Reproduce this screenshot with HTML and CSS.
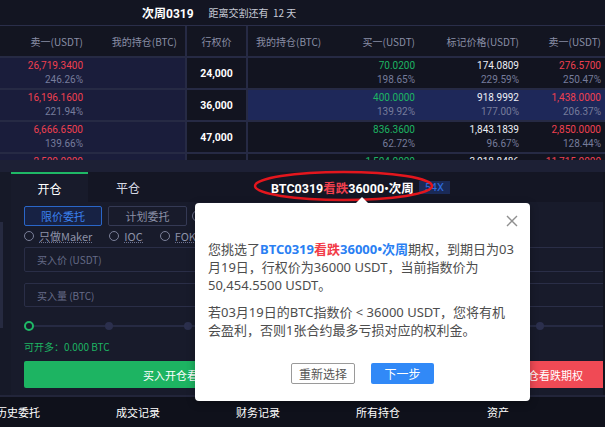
FILE: index.html
```html
<!DOCTYPE html>
<html lang="zh-CN">
<head>
<meta charset="utf-8">
<title>期权交易</title>
<link rel="stylesheet" href="styles.css">
</head>
<body>
<div class="app">
  <header class="topbar">
    <span class="week">次周0319</span>
    <span class="countdown">距离交割还有&nbsp; 12 天</span>
  </header>

  <section class="chain">
    <div class="row head">
      <div class="c l">卖一(USDT)</div>
      <div class="c l">我的持仓(BTC)</div>
      <div class="c mid">行权价</div>
      <div class="c r start">我的持仓(BTC)</div>
      <div class="c r">买一(USDT)</div>
      <div class="c r">标记价格(USDT)</div>
      <div class="c r last">卖一(USDT)</div>
    </div>
    <div class="row">
      <div class="c l"><span class="p red">26,719.3400</span><span class="pct">246.26%</span></div>
      <div class="c l"></div>
      <div class="c mid strike">24,000</div>
      <div class="c r start"></div>
      <div class="c r"><span class="p green">70.0200</span><span class="pct">198.65%</span></div>
      <div class="c r"><span class="p white">174.0809</span><span class="pct">229.59%</span></div>
      <div class="c r last"><span class="p red">276.5700</span><span class="pct">250.47%</span></div>
    </div>
    <div class="row sel">
      <div class="c l"><span class="p red">16,196.1600</span><span class="pct">221.94%</span></div>
      <div class="c l"></div>
      <div class="c mid strike">36,000</div>
      <div class="c r start"></div>
      <div class="c r"><span class="p green">400.0000</span><span class="pct">139.92%</span></div>
      <div class="c r"><span class="p white">918.9992</span><span class="pct">177.00%</span></div>
      <div class="c r last"><span class="p red">1,438.0000</span><span class="pct">206.37%</span></div>
    </div>
    <div class="row">
      <div class="c l"><span class="p red">6,666.6500</span><span class="pct">139.66%</span></div>
      <div class="c l"></div>
      <div class="c mid strike">47,000</div>
      <div class="c r start"></div>
      <div class="c r"><span class="p green">836.3600</span><span class="pct">62.72%</span></div>
      <div class="c r"><span class="p white">1,843.1839</span><span class="pct">96.67%</span></div>
      <div class="c r last"><span class="p red">2,850.0000</span><span class="pct">128.44%</span></div>
    </div>
    <div class="row">
      <div class="c l"><span class="p red">2,500.0000</span><span class="pct">85.12%</span></div>
      <div class="c l"></div>
      <div class="c mid strike">58,000</div>
      <div class="c r start"></div>
      <div class="c r"><span class="p green">1,504.0000</span><span class="pct">40.21%</span></div>
      <div class="c r"><span class="p white">3,018.8486</span><span class="pct">70.35%</span></div>
      <div class="c r last"><span class="p red">11,715.0000</span><span class="pct">98.10%</span></div>
    </div>
  </section>

  <div class="band"></div>

  <section class="trade">
    <div class="strip"><div class="thumb"></div></div>
    <div class="panel">
      <div class="tabs">
        <div class="tab active">开仓</div>
        <div class="tab">平仓</div>
        <div class="title">BTC0319<span class="down">看跌</span>36000•次周</div>
        <div class="badge">54X</div>
      </div>
      <div class="opts">
        <div class="types">
          <div class="type on">限价委托</div>
          <div class="type">计划委托</div>
          <div class="help"></div>
        </div>
        <div class="radios">
          <div class="radio"><span class="dot"></span><span class="lbl">只做Maker</span></div>
          <div class="radio"><span class="dot"></span><span class="lbl">IOC</span></div>
          <div class="radio"><span class="dot"></span><span class="lbl">FOK</span></div>
        </div>
      </div>
      <div class="forms">
        <div class="form">
          <div class="field">买入价 (USDT)</div>
          <div class="field second">买入量 (BTC)</div>
          <div class="slider"><span class="knob"></span><span class="tick"></span><span class="tick"></span><span class="tick"></span><span class="tick"></span></div>
          <div class="avail">可开多：0.000 BTC</div>
          <div class="btn buy">买入开仓看跌期权</div>
        </div>
        <div class="form">
          <div class="field">卖出价 (USDT)</div>
          <div class="field second">卖出量 (BTC)</div>
          <div class="slider"><span class="knob"></span><span class="tick"></span><span class="tick"></span><span class="tick"></span><span class="tick"></span></div>
          <div class="avail">可开空：0.000 BTC</div>
          <div class="btn sell">卖出开仓看跌期权</div>
        </div>
      </div>
    </div>
  </section>

  <div class="divider"></div>

  <nav class="bottom-nav">
    <span class="nav-item">历史委托</span>
    <span class="nav-item">成交记录</span>
    <span class="nav-item">财务记录</span>
    <span class="nav-item">所有持仓</span>
    <span class="nav-item">资产</span>
  </nav>

  <svg class="ring" width="182" height="32" viewBox="0 0 182 32">
    <ellipse cx="90.5" cy="16" rx="88.5" ry="14" fill="none" stroke="#e3161d" stroke-width="2.5"/>
  </svg>

  <div class="pop">
    <span class="arrow"></span>
    <svg class="close" width="12" height="12" viewBox="0 0 12 12">
      <path d="M1 1 L11 11 M11 1 L1 11" stroke="#8f8f8f" stroke-width="1.4" fill="none"/>
    </svg>
    <p class="msg">您挑选了<b class="blue">BTC0319</b><b class="redb">看跌</b><b class="blue">36000•次周</b>期权，到期日为03<br>月19日，行权价为36000 USDT，当前指数价为<br>50,454.5500 USDT。</p>
    <p class="msg second">若03月19日的BTC指数价 &lt; 36000 USDT，您将有机<br>会盈利，否则1张合约最多亏损对应的权利金。</p>
    <div class="actions">
      <span class="act ghost">重新选择</span>
      <span class="act primary">下一步</span>
    </div>
  </div>
</div>
</body>
</html>
```

FILE: styles.css
```css
* { box-sizing: border-box; margin: 0; padding: 0; }
html, body { width: 605px; height: 427px; overflow: hidden; }
body {
  background: #131520;
  font-family: Roboto, "Noto Sans CJK SC", sans-serif;
  color: #fff;
}
.app {
  width: 605px;
  height: 427px;
  position: relative;
  overflow: hidden;
  display: flex;
  flex-direction: column;
}

/* top bar */
.topbar {
  flex: none;
  height: 26px;
  display: flex;
  align-items: center;
  padding-left: 142px;
  gap: 15px;
  background: #131522;
  border-bottom: 1px solid #2a2e4a;
}
.week { font-size: 12px; font-weight: 700; color: #fff; }
.countdown { font-size: 10px; color: #c7cad6; font-family: "Noto Sans CJK SC", sans-serif; }

/* chain table */
.chain { flex: none; height: 134px; overflow: hidden; }
.row {
  display: grid;
  grid-template-columns: 91px 94px 63px 92px 83px 104px 78px;
  height: 32px;
  border-bottom: 2px solid #262a44;
}
.c {
  display: flex;
  flex-direction: column;
  justify-content: center;
  align-items: flex-end;
  padding: 0 8px;
  background: #121420;
}
.row .c.l { background: #1a1d3b; }
.row.head .c { background: #131521; font-size: 10px; color: #8a8fa6; font-family: "Noto Sans CJK SC", sans-serif; }
.c.mid { align-items: center; border-left: 2px solid #262a44; border-right: 2px solid #262a44; background: #121420; }
.c.start { align-items: flex-start; }
.c.last { padding-right: 4px; }
.row.sel .c.r { background: #1e2859; }
.p, .pct { font-size: 10px; line-height: 14px; }
.pct { color: #767c9b; }
.red { color: #ef4050; }
.green { color: #1db463; }
.white { color: #eceef5; }
.strike { font-size: 10.5px; font-weight: 700; color: #fff; }

.band { flex: none; height: 12px; background: #1d2035; }

/* trade panel */
.trade { flex: none; height: 223px; display: flex; }
.strip { width: 11px; background: #161928; padding: 50px 8px 67px 0; }
.thumb { width: 3px; height: 100%; background: #262a40; }
.panel {
  flex: 1;
  min-width: 0;
  background: #181b2b;
  overflow: hidden;
  border-right: 2px solid #12141f;
}
.tabs { display: flex; align-items: center; height: 30px; background: #141624; }
.tab {
  flex: none;
  width: 77px;
  height: 30px;
  display: flex;
  align-items: center;
  justify-content: center;
  font-size: 12px;
  color: #d6d9e4;
  font-family: "Noto Sans CJK SC", sans-serif;
}
.tab + .tab { width: 80px; }
.tab.active { background: #181b2b; border-top: 2px solid #1fb866; color: #fff; }
.title {
  margin-left: 103px;
  font-size: 12.5px;
  font-weight: 700;
  color: #fff;
  white-space: nowrap;
}
.title .down { color: #f0404e; }
.badge {
  margin-left: 5px;
  height: 13px;
  padding: 0 6px;
  background: #1a2a57;
  color: #2e6de0;
  font-size: 11px;
  line-height: 13px;
}

.opts { padding: 4px 13px 0; font-family: "Noto Sans CJK SC", sans-serif; }
.types { display: flex; align-items: center; gap: 6px; height: 20px; }
.type {
  width: 78px;
  height: 20px;
  border: 1px solid #353a55;
  border-radius: 2px;
  color: #8a8fa6;
  font-size: 11px;
  display: flex;
  align-items: center;
  justify-content: center;
}
.type + .type { width: 79px; }
.type.on { border-color: #2a66c8; background: #172244; color: #3a80ee; }
.help { width: 12px; height: 12px; border: 1.5px solid #6f7490; border-radius: 50%; margin-left: -1px; }
.radios { display: flex; align-items: center; gap: 17px; margin-top: 4px; height: 12px; }
.radio { display: flex; align-items: center; gap: 5px; }
.radio .dot { width: 10px; height: 10px; border: 1.5px solid #7b8099; border-radius: 50%; }
.radio .lbl {
  font-size: 11px;
  line-height: 12px;
  color: #8d92a8;
  border-bottom: 1px dotted #6d7290;
}

.forms {
  display: grid;
  grid-template-columns: 326px 326px;
  column-gap: 26px;
  padding: 0 13px;
  margin-top: 5px;
}
.field {
  height: 25px;
  border: 1px solid #2a2e47;
  border-radius: 2px;
  padding-left: 12px;
  display: flex;
  align-items: center;
  font-size: 10px;
  color: #666b88;
  font-family: "Noto Sans CJK SC", sans-serif;
}
.field.second { margin-top: 11px; height: 24px; }
.slider {
  margin-top: 14px;
  height: 10px;
  display: flex;
  justify-content: space-between;
  align-items: center;
  background: linear-gradient(#262a43, #262a43) center / 100% 2px no-repeat;
}
.knob { width: 10px; height: 10px; border: 2px solid #1fb866; border-radius: 50%; background: #181b2b; }
.tick { width: 8px; height: 8px; border-radius: 50%; background: #2b2f4d; }
.avail {
  margin-top: 10px;
  font-size: 10px;
  line-height: 12px;
  color: #1db463;
  font-family: "Noto Sans CJK SC", sans-serif;
}
.btn {
  margin-top: 8px;
  height: 27px;
  border-radius: 2px;
  display: flex;
  align-items: center;
  justify-content: center;
  font-size: 11px;
  color: #fff;
  font-family: "Noto Sans CJK SC", sans-serif;
}
.btn.buy { background: #1db462; }
.btn.sell { background: #f04a55; }

.divider { flex: none; height: 2px; background: #22253a; }

.bottom-nav {
  flex: none;
  height: 30px;
  display: flex;
  align-items: center;
  margin-left: -42px;
  background: #0f111b;
}
.nav-item {
  width: 120px;
  text-align: center;
  font-size: 11px;
  color: #fff;
  font-family: "Noto Sans CJK SC", sans-serif;
}

/* overlays */
.ring { position: absolute; left: 253px; top: 170px; }
.pop {
  position: absolute;
  left: 195px;
  top: 203px;
  width: 335px;
  height: 198px;
  background: #fff;
  border-radius: 4px;
  padding: 37px 13px 0;
  box-shadow: 0 2px 8px rgba(0, 0, 0, 0.3);
  font-family: "Noto Sans", "Noto Sans CJK SC", sans-serif;
}
.arrow {
  position: absolute;
  left: 161px;
  top: -6px;
  width: 0;
  height: 0;
  border-left: 6px solid transparent;
  border-right: 6px solid transparent;
  border-bottom: 6px solid #fff;
}
.close { position: absolute; left: 311px; top: 12px; }
.msg { font-size: 13px; line-height: 18px; color: #4d4d4d; white-space: nowrap; }
.msg.second { margin-top: 9px; }
.msg .blue { color: #2a7ff3; }
.msg .redb { color: #f23b48; }
.actions { display: flex; justify-content: center; gap: 16px; margin-top: 24px; }
.act {
  width: 64px;
  height: 21px;
  display: flex;
  align-items: center;
  justify-content: center;
  font-size: 12px;
  border-radius: 2px;
  font-family: "Noto Sans CJK SC", sans-serif;
}
.act.ghost { border: 1px solid #9a9a9a; color: #555; background: #fff; }
.act.primary { background: #3189f7; color: #fff; width: 63px; }
```
